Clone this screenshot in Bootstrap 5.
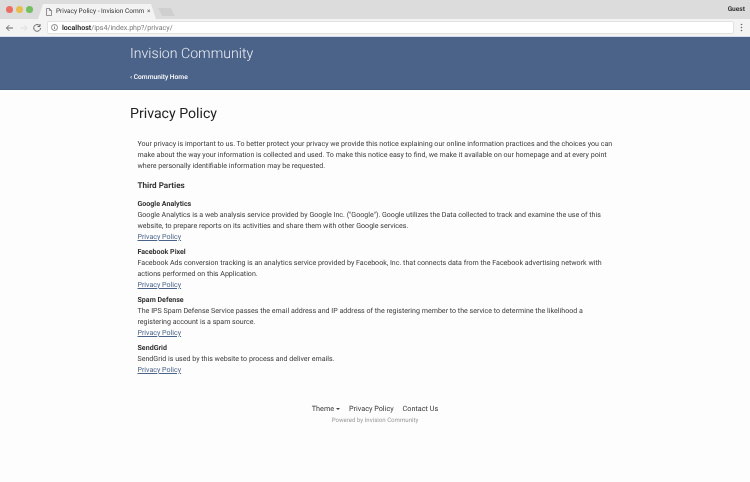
<!DOCTYPE html>
<html lang="en"><head><meta charset="utf-8"><title>Privacy Policy</title>
<link rel="stylesheet" href="https://cdn.jsdelivr.net/npm/bootstrap@5.3.0/dist/css/bootstrap.min.css">
<style>
html,body{height:482px;overflow:hidden}
html{background:#fdfdfd}
body{background:transparent;font-family:Roboto,"Liberation Sans",sans-serif;color:#333;font-size:7.08px;line-height:11px;text-rendering:geometricPrecision;will-change:transform}
.tabbar{height:19px;background:#dcdcdc}
.dots{gap:3px;padding:6px 0 0 6px;width:38px}
.dot{width:7px;height:7px;border-radius:50%}
.tabshape{width:118px;height:15px;margin-top:4px;background:#f3f3f3;clip-path:polygon(0 100%,5px 0,calc(100% - 5px) 0,100% 100%);font-size:6.5px;line-height:15px;color:#333;padding:0 0 0 8px}
.tabtitle{white-space:nowrap;width:88px;margin:0 3px 0 4px;flex:none}
.newtab{width:17px;height:8px;margin:8px 0 0 2px;background:#cfcfcf;clip-path:polygon(0 0,75% 0,100% 100%,25% 100%)}
.guest{font-size:6.6px;font-weight:700;color:#333;padding:4px 5px 0 0;line-height:11px}
.toolbar{height:18px;background:#f3f3f3;border-bottom:1px solid #d5dceb;padding:0 7px 0 5px}
.urlbox{height:13px;background:#fff;border:1px solid #e2e2e2;border-radius:2px;font-size:7.08px;line-height:11px;color:#777;padding-left:3px;margin:0 6px 0 0}
.urlbox b{font-weight:700;color:#333}
.hero{background:#4b6389;height:53px;padding:7px 0 0 130px;color:#fff;border-bottom:1px solid #43597d}
.brandline{font-size:14.15px;font-weight:300;line-height:20px;color:#e9edf3}
.backline{font-size:6.7px;font-weight:500;line-height:10px;margin-top:8px}
.pagebox{padding:0 0 0 130px;width:620px}
.bigtitle{font-size:14.15px;font-weight:400;line-height:20px;margin:14px 0 14px;color:#222}
.policy{padding:0 0 0 7.5px;width:484px}
.policy p{margin:0;font-size:7.08px;line-height:11px;color:#3a3a3a}
.subhead{font-size:8.1px;font-weight:700;line-height:12px;margin:8px 0 7px;color:#333}
.svc{margin-bottom:4px;font-size:7.08px;line-height:11px;color:#3a3a3a}
.svc strong{display:block;font-weight:700;font-size:7.08px;color:#333}
.svc a{color:#4b6389;text-decoration:underline;display:block}
.foot{margin-top:28px;font-size:7.25px;line-height:11px;color:#3a3a3a;gap:9px}
.powered{text-align:center;font-size:6.1px;color:#999;line-height:10px;margin-top:2px}
.caret{display:inline-block;border:2.4px solid transparent;border-top-color:#444;border-bottom:0;vertical-align:1px}
</style></head>
<body>
<div class="tabbar d-flex">
 <div class="dots d-flex"><span class="dot" style="background:#e96e63"></span><span class="dot" style="background:#e6bd4e"></span><span class="dot" style="background:#72bf5f"></span></div>
 <div class="tabshape d-flex align-items-center">
  <svg width="6" height="8" viewBox="0 0 6 8" class="flex-shrink-0"><path d="M.5.5h3l2 2v5h-5zM3.500.5v2h2" fill="none" stroke="#666" stroke-width=".7"/></svg>
  <span class="tabtitle">Privacy Policy - Invision Comm</span><span>×</span>
 </div>
 <div class="newtab"></div>
 <div class="guest ms-auto">Guest</div>
</div>
<div class="toolbar d-flex align-items-center">
 <svg width="42" height="10" viewBox="0 0 42 10" class="flex-shrink-0"><path d="M8 5H1.500M4.200 2.200 1.500 5l2.700 2.800" fill="none" stroke="#666" stroke-width="1"/><path d="M15.500 5H22M19.300 2.200 22 5l-2.700 2.800" fill="none" stroke="#ddd" stroke-width="1"/><path d="M34.600 2.600a3.400 3.400 0 1 0 .9 2.400M35 1v2.500h-2.500" fill="none" stroke="#666" stroke-width="1"/></svg>
 <div class="urlbox flex-grow-1 d-flex align-items-center"><svg width="7" height="7" viewBox="0 0 7 7" class="me-1 flex-shrink-0"><circle cx="3.500" cy="3.500" r="3" fill="none" stroke="#555" stroke-width=".7"/><path d="M3.500 3v2M3.500 1.700v.7" stroke="#555" stroke-width=".7"/></svg><span><b>localhost</b>/ips4/index.php?/privacy/</span></div>
 <svg width="3" height="9" viewBox="0 0 3 9" class="flex-shrink-0"><circle cx="1.500" cy="1.500" r=".8" fill="#666"/><circle cx="1.500" cy="4.500" r=".8" fill="#666"/><circle cx="1.500" cy="7.500" r=".8" fill="#666"/></svg>
</div>
<div class="hero">
 <div class="brandline">Invision Community</div>
 <div class="backline">‹ Community Home</div>
</div>
<main class="pagebox">
 <h1 class="bigtitle">Privacy Policy</h1>
 <div class="policy">
  <p>Your privacy is important to us. To better protect your privacy we provide this notice explaining our online information practices and the choices you can make about the way your information is collected and used. To make this notice easy to find, we make it available on our homepage and at every point where personally identifiable information may be requested.</p>
  <div class="subhead">Third Parties</div>
  <div class="svc"><strong>Google Analytics</strong>Google Analytics is a web analysis service provided by Google Inc. ("Google"). Google utilizes the Data collected to track and examine the use of this website, to prepare reports on its activities and share them with other Google services.<a href="#">Privacy Policy</a></div>
  <div class="svc"><strong>Facebook Pixel</strong>Facebook Ads conversion tracking is an analytics service provided by Facebook, Inc. that connects data from the Facebook advertising network with actions performed on this Application.<a href="#">Privacy Policy</a></div>
  <div class="svc"><strong>Spam Defense</strong>The IPS Spam Defense Service passes the email address and IP address of the registering member to the service to determine the likelihood a registering account is a spam source.<a href="#">Privacy Policy</a></div>
  <div class="svc"><strong>SendGrid</strong>SendGrid is used by this website to process and deliver emails.<a href="#">Privacy Policy</a></div>
 </div>
</main>
<div class="foot d-flex justify-content-center"><span>Theme <span class="caret"></span></span><span>Privacy Policy</span><span>Contact Us</span></div>
<div class="powered">Powered by Invision Community</div>
</body></html>
